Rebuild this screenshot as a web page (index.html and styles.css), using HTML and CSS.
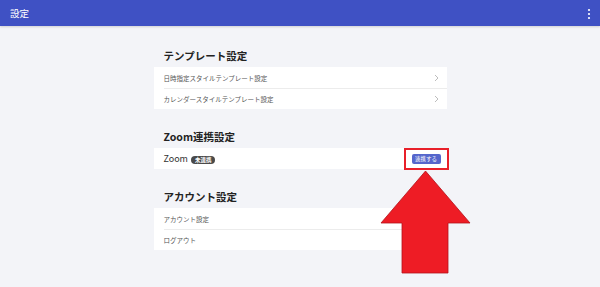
FILE: index.html
```html
<!DOCTYPE html>
<html lang="ja">
<head>
<meta charset="utf-8">
<link rel="stylesheet" href="styles.css">
</head>
<body>
<header class="appbar">
  <span class="appbar-title">設定</span>
  <svg class="kebab" width="4" height="12" viewBox="0 0 4 12"><circle cx="2" cy="2" r="1.1" fill="#fff"/><circle cx="2" cy="6" r="1.1" fill="#fff"/><circle cx="2" cy="10" r="1.1" fill="#fff"/></svg>
</header>
<main class="content">
  <section class="section">
    <h2 class="section-title">テンプレート設定</h2>
    <div class="card">
      <div class="row"><span>日時指定スタイルテンプレート設定</span><svg class="chev" width="5" height="8" viewBox="0 0 5 8"><polyline points="1,1 4,4 1,7" fill="none" stroke="#b5b5b5" stroke-width="0.9"/></svg></div>
      <div class="row"><span>カレンダースタイルテンプレート設定</span><svg class="chev" width="5" height="8" viewBox="0 0 5 8"><polyline points="1,1 4,4 1,7" fill="none" stroke="#b5b5b5" stroke-width="0.9"/></svg></div>
    </div>
  </section>
  <section class="section">
    <h2 class="section-title">Zoom連携設定</h2>
    <div class="card">
      <div class="row row-zoom">
        <span class="zoom-label">Zoom <span class="badge">未連携</span></span>
        <span class="btn">連携する</span>
      </div>
    </div>
  </section>
  <section class="section">
    <h2 class="section-title">アカウント設定</h2>
    <div class="card">
      <div class="row"><span>アカウント設定</span></div>
      <div class="row"><span>ログアウト</span></div>
    </div>
  </section>
</main>
<svg class="arrow" width="600" height="287" viewBox="0 0 600 287">
  <polygon points="425.5,171 381,223 402,223 402,273 448,273 448,223 470,223" fill="#ee1c25" stroke="#b3121a" stroke-width="0.8"/>
</svg>
</body>
</html>
```
FILE: styles.css
```css
* { box-sizing: border-box; }
html, body { margin: 0; padding: 0; }
body {
  width: 600px;
  height: 287px;
  overflow: hidden;
  background: #f3f4f8;
  font-family: "Noto Sans CJK JP", "Noto Sans", sans-serif;
  color: #333;
  position: relative;
}
.appbar {
  height: 26px;
  background: #3f51c4;
  display: flex;
  align-items: center;
  justify-content: space-between;
  padding: 0 9px 0 10px;
  box-shadow: 0 1px 2px rgba(0,0,0,0.15);
}
.appbar-title {
  color: #fff;
  font-size: 9.5px;
  line-height: 1;
  margin-top: 1px;
}
.kebab { display: block; margin-top: 1px; }
.content {
  width: 293px;
  margin: 0 auto;
  padding-top: 23px;
  display: flex;
  flex-direction: column;
  gap: 21px;
}
.section-title {
  margin: 0 0 4px 0;
  padding-left: 10px;
  font-size: 10.5px;
  line-height: 14px;
  font-weight: 700;
  color: #222;
}
.card {
  background: #fff;
}
.row {
  height: 21px;
  display: flex;
  align-items: center;
  justify-content: space-between;
  padding: 0 6px 0 10px;
  font-size: 6.5px;
  color: #555;
  position: relative;
}
.row + .row::before {
  content: "";
  position: absolute;
  left: 10px;
  right: 0;
  top: 0;
  height: 1px;
  background: #ececec;
}
.chev { display: block; margin-right: 2px; }
.row-zoom { padding-right: 6px; }
.zoom-label {
  font-size: 9px;
  color: #333;
  display: flex;
  align-items: center;
  gap: 3px;
}
.badge {
  display: inline-block;
  background: #4a4a4a;
  color: #fff;
  font-size: 5.5px;
  font-weight: 700;
  line-height: 8px;
  height: 8px;
  padding: 0 4px;
  border-radius: 4px;
  margin-top: 3px;
}
.btn {
  position: relative;
  display: inline-flex;
  align-items: center;
  justify-content: center;
  width: 29px;
  height: 10px;
  background: #5566cc;
  color: #fff;
  font-size: 5.5px;
  border-radius: 2px;
}
.btn::after {
  content: "";
  position: absolute;
  left: -8px;
  right: -8px;
  top: -6px;
  bottom: -6px;
  border: 2px solid #e8202a;
}
.arrow {
  position: absolute;
  left: 0;
  top: 0;
  pointer-events: none;
}
```
